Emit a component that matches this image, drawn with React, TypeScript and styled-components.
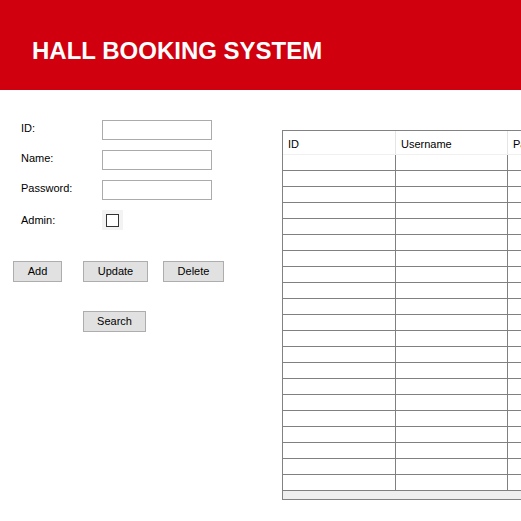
import React from 'react'
import styled, { createGlobalStyle } from 'styled-components'

const GlobalStyle = createGlobalStyle`
  html, body {
    margin: 0;
    padding: 0;
    background: #fff;
    overflow: hidden;
  }
  body {
    font-family: 'Liberation Sans', Arial, sans-serif;
  }
`

const Main = styled.main`
  width: 521px;
  height: 521px;
  overflow: hidden;
  background: #fff;
`

const Header = styled.header`
  height: 90px;
  box-sizing: border-box;
  padding: 39px 0 0 32px;
  background: #d1000f;
`

const Title = styled.h1`
  margin: 0;
  color: #fff;
  font-size: 24px;
  line-height: 24px;
  font-weight: 700;
`

const Content = styled.section`
  display: flex;
  flex-direction: row;
`

const FormPanel = styled.div`
  width: 282px;
  flex-shrink: 0;
  box-sizing: border-box;
  padding-top: 30px;
`

const FormGrid = styled.div`
  display: grid;
  grid-template-columns: 81px 110px;
  grid-auto-rows: 20px;
  row-gap: 10px;
  align-items: center;
  padding-left: 21px;
`

const Label = styled.label<{ $shift?: number }>`
  font-size: 11px;
  line-height: 13px;
  color: #000;
  margin-top: ${(p) => p.$shift ?? -3}px;
`

const TextInput = styled.input`
  width: 110px;
  height: 20px;
  box-sizing: border-box;
  border: 1px solid #ababab;
  background: #fff;
  padding: 0 3px;
  margin: 0;
  outline: none;
`

const CheckBoxWrap = styled.div`
  width: 21px;
  height: 20px;
  background: #f3f3f3;
  display: flex;
  align-items: center;
  justify-content: center;
`

const CheckBox = styled.div`
  width: 13px;
  height: 13px;
  box-sizing: border-box;
  border: 1px solid #333;
  background: #fff;
  margin-left: -1px;
`

const ButtonRow = styled.div<{ $top: number; $left: number }>`
  display: flex;
  flex-direction: row;
  margin-top: ${(p) => p.$top}px;
  padding-left: ${(p) => p.$left}px;
`

const Button = styled.button<{ $w: number; $gap?: number }>`
  width: ${(p) => p.$w}px;
  height: 21px;
  box-sizing: border-box;
  margin: 0 0 0 ${(p) => p.$gap ?? 0}px;
  padding: 0;
  border: 1px solid #adadad;
  background: #e1e1e1;
  color: #000;
  font-family: 'Liberation Sans', Arial, sans-serif;
  font-size: 11px;
  line-height: 19px;
`

const TablePanel = styled.div`
  flex: 1;
  padding-top: 40px;
  overflow: hidden;
`

const Grid = styled.div`
  width: 400px;
  border: 1px solid #828282;
  border-right: none;
  background: #fff;
`

const HeadRow = styled.div`
  display: flex;
  height: 24px;
  box-sizing: border-box;
  border-bottom: 1px solid #f0f0f0;
`

const HeadCell = styled.div<{ $w: number }>`
  width: ${(p) => p.$w}px;
  flex-shrink: 0;
  box-sizing: border-box;
  border-right: 1px solid #e5e5e5;
  padding: 7px 0 0 5px;
  font-size: 11px;
  line-height: 13px;
  color: #000;
  white-space: nowrap;
`

const BodyRow = styled.div`
  display: flex;
  height: 16px;
  box-sizing: border-box;
  border-bottom: 1px solid #808080;
`

const BodyCell = styled.div<{ $w: number }>`
  width: ${(p) => p.$w}px;
  flex-shrink: 0;
  box-sizing: border-box;
  border-right: 1px solid #808080;
`

const ScrollStrip = styled.div`
  height: 8px;
  background: #efefef;
`

const columns = [
  { name: 'ID', width: 113 },
  { name: 'Username', width: 112 },
  { name: 'Password', width: 112 },
  { name: 'Admin', width: 112 },
]

const rows = Array.from({ length: 21 }, (_, i) => i)

function App() {
  return (
    <Main>
      <GlobalStyle />
      <Header>
        <Title>HALL BOOKING SYSTEM</Title>
      </Header>
      <Content>
        <FormPanel>
          <FormGrid>
            <Label>ID:</Label>
            <TextInput />
            <Label>Name:</Label>
            <TextInput />
            <Label>Password:</Label>
            <TextInput type="password" />
            <Label $shift={0}>Admin:</Label>
            <CheckBoxWrap>
              <CheckBox />
            </CheckBoxWrap>
          </FormGrid>
          <ButtonRow $top={31} $left={13}>
            <Button $w={49}>Add</Button>
            <Button $w={65} $gap={21}>Update</Button>
            <Button $w={61} $gap={15}>Delete</Button>
          </ButtonRow>
          <ButtonRow $top={29} $left={83}>
            <Button $w={63}>Search</Button>
          </ButtonRow>
        </FormPanel>
        <TablePanel>
          <Grid>
            <HeadRow>
              {columns.map((c) => (
                <HeadCell key={c.name} $w={c.width}>
                  {c.name}
                </HeadCell>
              ))}
            </HeadRow>
            {rows.map((r) => (
              <BodyRow key={r}>
                {columns.map((c) => (
                  <BodyCell key={c.name} $w={c.width} />
                ))}
              </BodyRow>
            ))}
            <ScrollStrip />
          </Grid>
        </TablePanel>
      </Content>
    </Main>
  )
}

export default App
